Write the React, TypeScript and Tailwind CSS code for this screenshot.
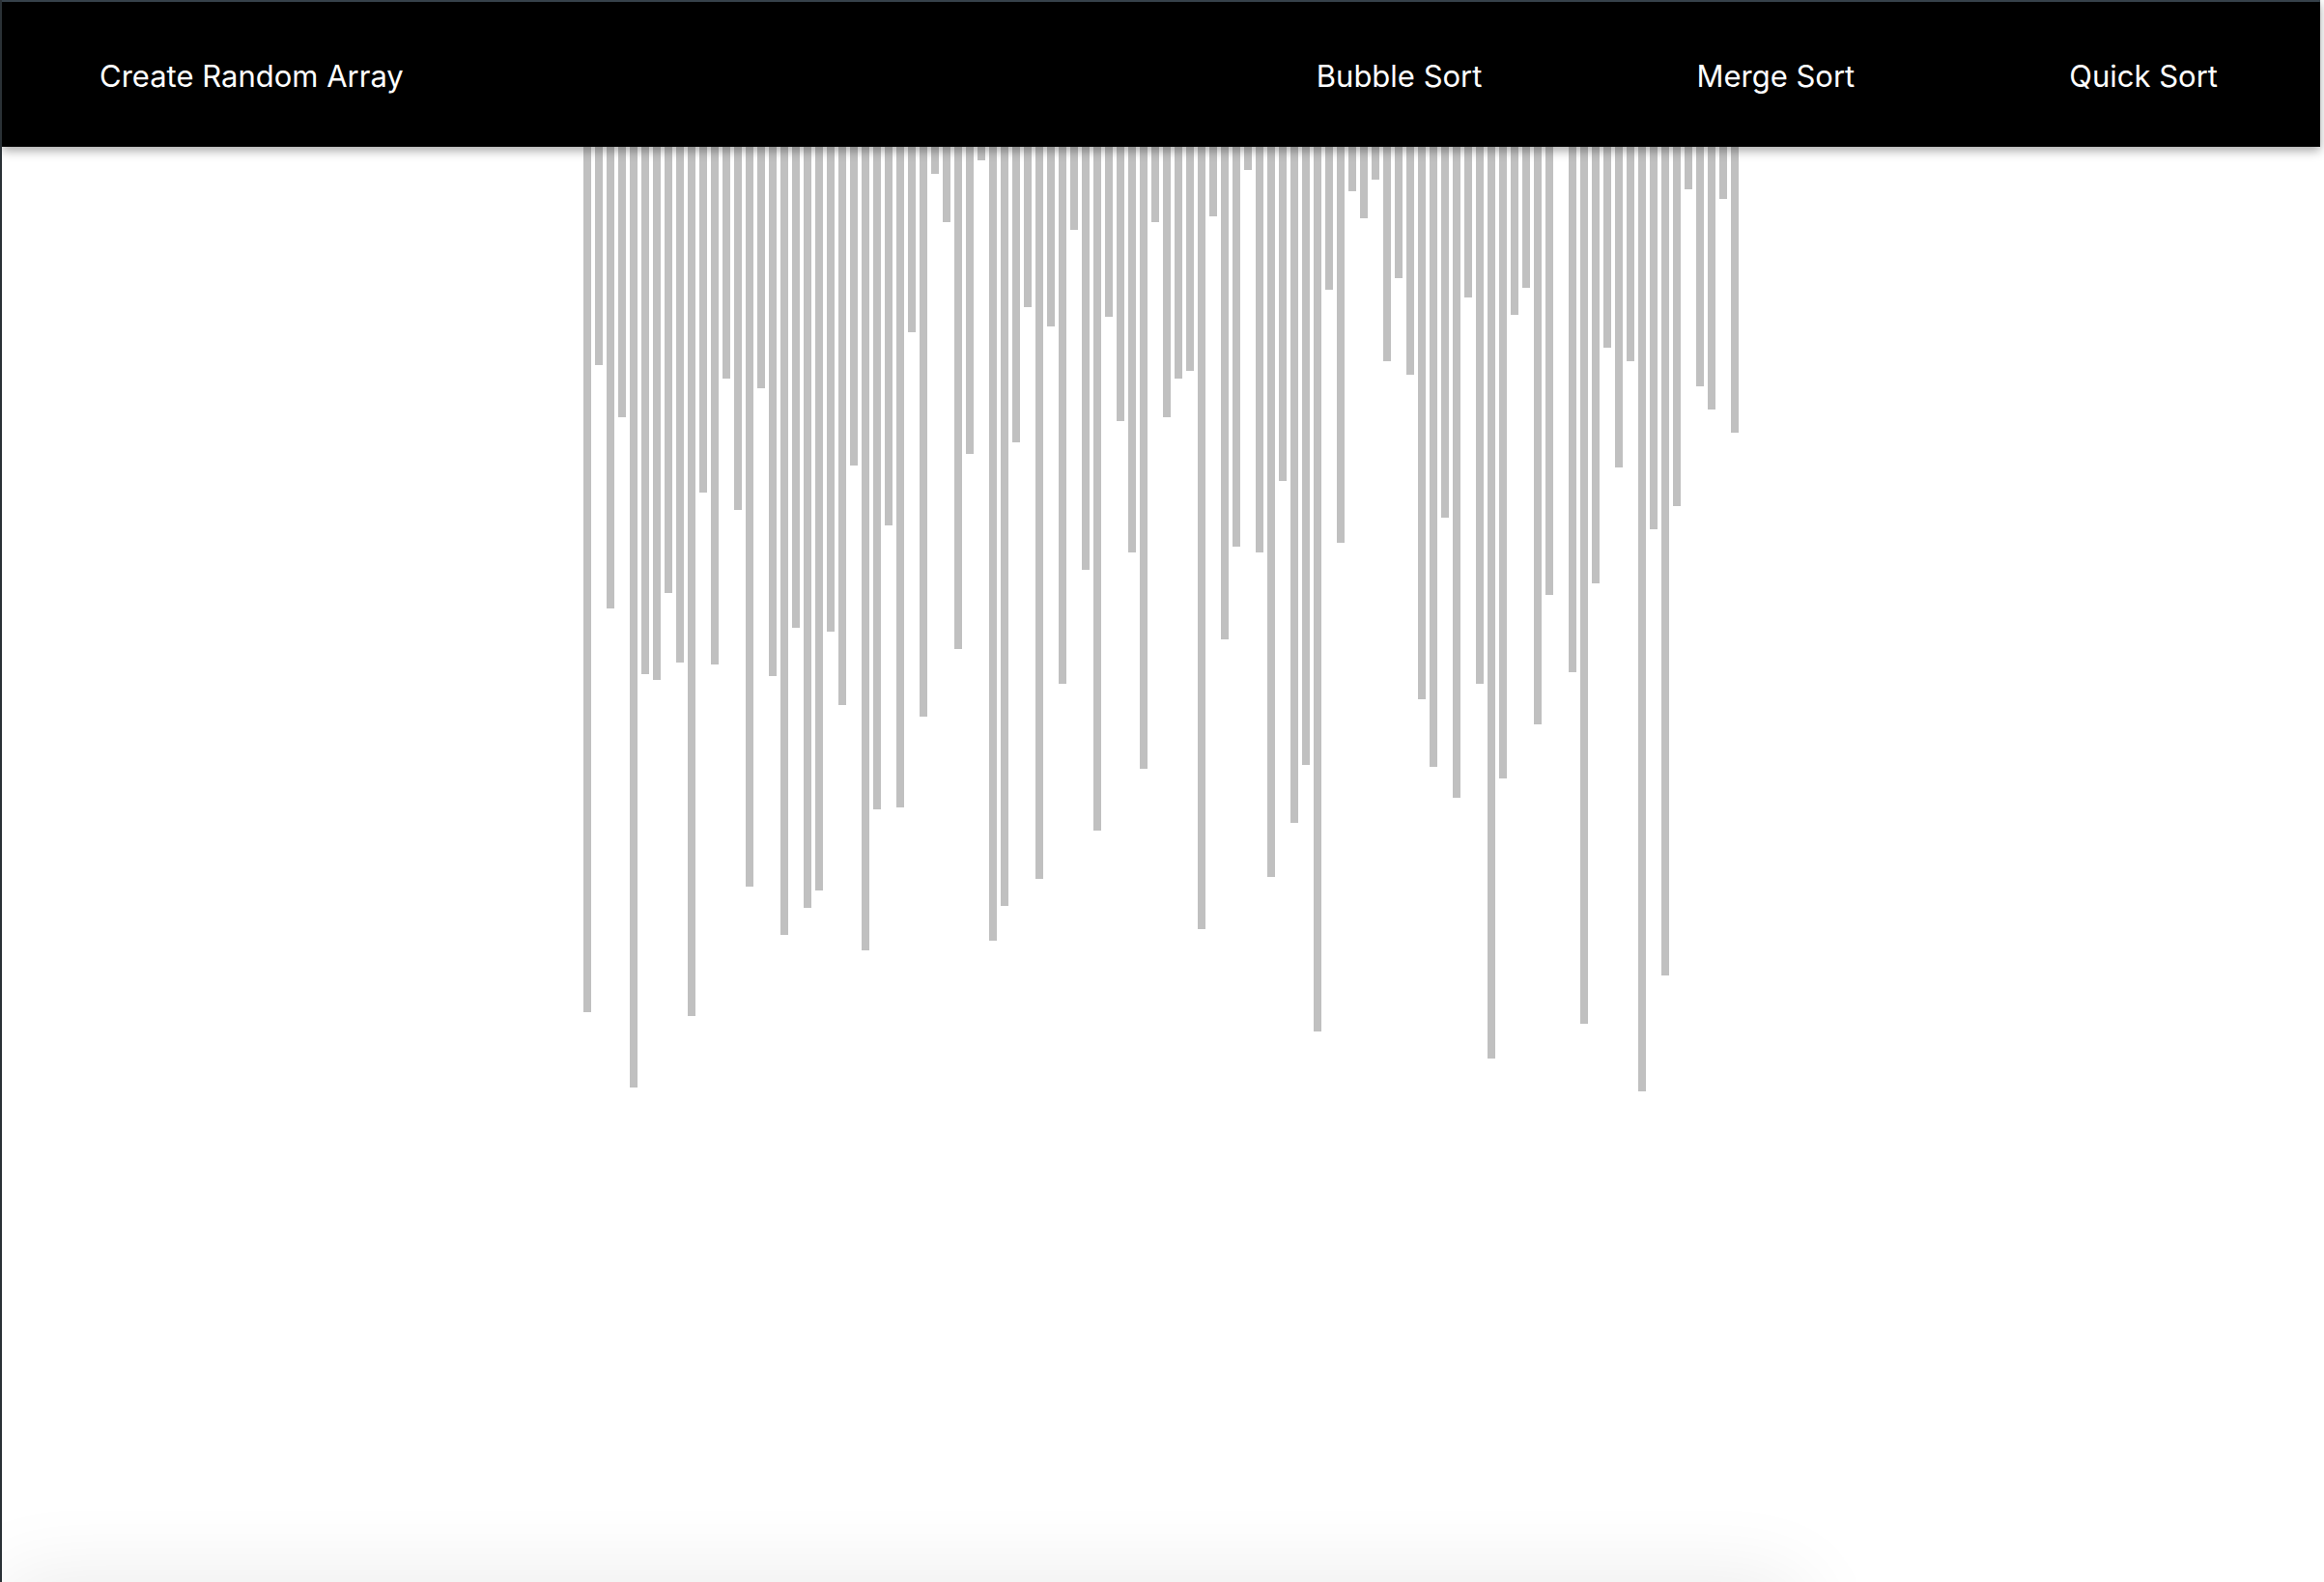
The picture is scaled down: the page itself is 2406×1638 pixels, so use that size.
import React from 'react';

// bar heights in px, measured from the header bottom
const heights: number[] = [
    896, 226, 478, 280, 974, 546, 552, 462, 534, 900,
    358, 536, 240, 376, 766, 250, 548, 816, 498, 788,
    770, 502, 578, 330, 832, 686, 392, 684, 192, 590,
    28, 78, 520, 318, 14, 822, 786, 306, 166, 758,
    186, 556, 86, 438, 708, 176, 284, 420, 644, 78,
    280, 240, 232, 810, 72, 510, 414, 24, 420, 756,
    346, 700, 640, 916, 148, 410, 46, 74, 34, 222,
    136, 236, 572, 642, 384, 674, 156, 556, 944, 654,
    174, 146, 598, 464, 0, 544, 908, 452, 208, 332,
    222, 978, 396, 858, 372, 44, 248, 272, 54, 296,
];

const App: React.FC = () => {
    return (
        <div className="relative h-screen w-full overflow-hidden bg-white border-l-2 border-[#2a3136]">
            {/* Nav */}
            <header className="relative z-10 mr-[4px] flex h-[152px] items-center border-t-2 border-[#36414a] bg-black pt-[3px] pl-[101px] pr-[106px] shadow-[0_4px_10px_rgba(0,0,0,0.35)] font-['Inter',sans-serif] text-[31px] text-white">
                <button className="leading-none">Create Random Array</button>
                <div className="ml-auto flex items-center gap-[222px]">
                    <button className="leading-none">Bubble Sort</button>
                    <button className="leading-none">Merge Sort</button>
                    <button className="leading-none">Quick Sort</button>
                </div>
            </header>

            {/* Array bars */}
            <div className="flex items-start justify-center pr-[4px]">
                {heights.map((h, i) => (
                    <div key={i} className="mx-[2px] w-[8px] bg-[#c0c0c0]" style={{ height: h }} />
                ))}
            </div>

            {/* shadow coming up from below the window */}
            <div className="absolute bottom-[-100px] left-0 h-[100px] w-[1860px] bg-white shadow-[0_0_90px_rgba(0,0,0,0.09)]" />
        </div>
    );
};

export default App;
